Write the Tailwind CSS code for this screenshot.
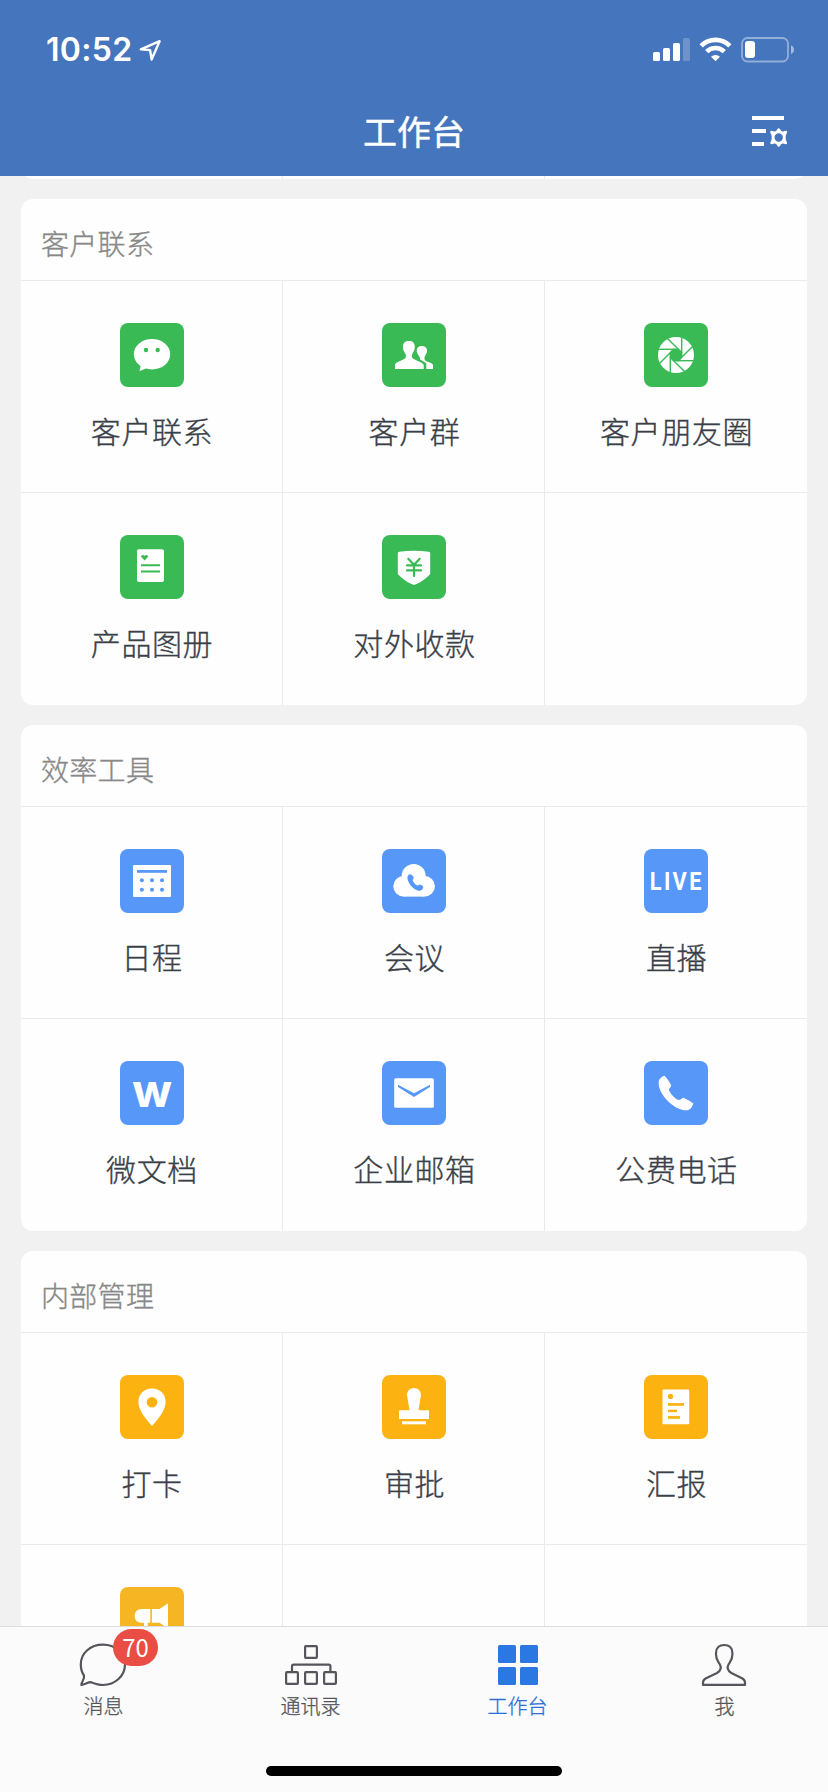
<!DOCTYPE html>
<html lang="zh-CN">
<head>
<meta charset="utf-8">
<title>工作台</title>
<script src="https://cdn.jsdelivr.net/npm/@tailwindcss/browser@4"></script>
</head>
<body class="bg-[#f1f1f1]">
<div class="flex h-[1792px] w-[828px] flex-col overflow-hidden bg-[#f1f1f1] font-['Noto_Sans_CJK_SC',sans-serif]">

  <header class="h-[176px] shrink-0 bg-[#4575bc] text-white">
    <div class="flex h-[99px] items-center justify-between pr-[33px] pl-[46px]">
      <div class="flex items-center gap-[6px]">
        <span class="font-['Inter',sans-serif] text-[32px] leading-none font-semibold tracking-[0.3px]">10:52</span>
        <svg class="h-[24px] w-[24px]" viewBox="0 0 24 24" fill="none" stroke="#fff" stroke-width="2.4" stroke-linejoin="round"><path d="M2.8 11.3 21.6 3.2 13.6 21.6 12.1 12.1Z"/></svg>
      </div>
      <svg class="h-[27px] w-[142px]" viewBox="653 36 142 27">
        <g fill="#fff"><rect x="653" y="52" width="7" height="9" rx="1.6"/><rect x="663" y="48" width="7" height="13" rx="1.6"/><rect x="673" y="43" width="7" height="18" rx="1.6"/><rect x="683" y="38" width="7" height="23" rx="1.6" opacity=".22"/></g>
        <g fill="none" stroke="#fff" stroke-width="4.6"><path d="M701.1 45.9a20.3 20.3 0 0 1 28.8 0"/><path d="M706.7 51.6a12.4 12.4 0 0 1 17.6 0"/></g>
        <path d="M715.5 61.2l-4.5-4.5a6.5 6.5 0 0 1 9 0z" fill="#fff"/>
        <rect x="742" y="38" width="46" height="23.5" rx="5.5" fill="none" stroke="#fff" stroke-width="1.8" opacity=".42"/>
        <rect x="745" y="41" width="10" height="17" rx="3" fill="#fff"/>
        <path d="M791 45.2c4 1.400 4 7.300 0 8.700z" fill="#fff" opacity=".5"/>
      </svg>
    </div>
    <div class="grid h-[66px] grid-cols-3 items-center pr-[38px] pl-[38px]">
      <span></span>
      <h1 class="pb-[2px] text-center text-[34px] leading-none font-normal [-webkit-text-stroke:0.4px]">工作台</h1>
      <svg class="h-[34px] w-[38px] justify-self-end" viewBox="752 115 38 34">
        <g fill="#fff"><rect x="752" y="116" width="32" height="4"/><rect x="752" y="129" width="14" height="4"/><rect x="752" y="142" width="12" height="4"/></g>
        <path fill="#fff" fill-rule="evenodd" d="M778.700 128.200c1 0 1.300 1.200 2.300 2.600.7.600 1.400.8 2.200.7 1.400-.2 3-1.200 3.700-.3.800 1-.5 2.200-1 3.800-.3.900-.3 4.100 0 5 .5 1.600 1.800 2.800 1 3.800-.7.900-2.300-.1-3.700-.3-.8-.1-1.500.1-2.200.7-1 1.400-1.300 2.600-2.300 2.600s-1.300-1.200-2.300-2.600c-.7-.6-1.400-.8-2.200-.7-1.400.2-3 1.200-3.700.3-.8-1 .5-2.200 1-3.800.3-.9.300-4.100 0-5-.5-1.600-1.800-2.800-1-3.800.7-.9 2.300.1 3.700.3.800.1 1.500-.1 2.200-.7 1-1.400 1.300-2.600 2.300-2.600ZM778.700 133.300a4.200 4.200 0 1 0 0 8.400 4.200 4.200 0 1 0 0-8.400Z"/>
      </svg>
    </div>
  </header>

  <main class="flex min-h-0 flex-1 flex-col gap-[20px] overflow-hidden px-[21px] text-[#3a4048] [-webkit-text-stroke:0.35px]">
    <!-- Tail of the card scrolled under the header -->
    <div class="flex h-[3px] shrink-0 flex-col justify-end overflow-hidden">
      <div class="grid h-[30px] shrink-0 grid-cols-3 overflow-hidden rounded-b-[12px] bg-white"><i class="border-r border-[#e9ebeb]"></i><i class="border-r border-[#e9ebeb]"></i><i></i></div>
    </div>

    <section class="shrink-0 overflow-hidden rounded-[12px] bg-[#fefefe]">
      <h2 class="flex h-[82px] items-center border-b border-[#e9ebeb] pt-[7px] pl-[20px] text-[28px] leading-none font-light tracking-[0.3px] text-[#888]">客户联系</h2>
      <div class="grid grid-cols-3 text-[30px] leading-none font-light tracking-[0.6px]">
        <div class="flex h-[212px] flex-col items-center gap-[28px] border-r border-b border-[#e9ebeb] pt-[42px]">
          <svg class="h-[64px] w-[64px] shrink-0" viewBox="0 0 64 64"><rect width="64" height="64" rx="8" fill="#39ba55"/><ellipse cx="32" cy="31.200" rx="18.200" ry="15.300" fill="#fff"/><path d="M20.600 40.500c.3 3-.5 5-1.300 7.500 2.700-.5 4.700-2 7.200-2.700z" fill="#fff"/><g fill="#39ba55"><circle cx="26" cy="27" r="2.200"/><circle cx="37.700" cy="27" r="2.200"/></g></svg>
          <span class="pl-px">客户联系</span>
        </div>
        <div class="flex h-[212px] flex-col items-center gap-[28px] border-r border-b border-[#e9ebeb] pt-[42px] pl-px">
          <svg class="h-[64px] w-[64px] shrink-0" viewBox="0 0 64 64"><rect width="64" height="64" rx="8" fill="#39ba55"/><path fill="#fff" d="M38 46V36.500c.1-1.200-.4-2.500-1.300-4-1.300-2-2-3.200-2-5 0-2.800 2-4.500 5.100-4.500s5.200 1.700 5.200 4.500c0 1.800-.6 3-1.700 5-1 1.700-1.100 2.900-.4 4.400 1.500 2.300 7 2.300 8.100 4.900V46z"/><path d="M43 47V41C42 39.500 37 38 34 35.800" fill="none" stroke="#39ba55" stroke-width="2.600"/><path fill="#fff" d="M13 46v-4.700c2.500-3.500 9-3.800 10.700-6.800.6-1.500.2-3-.7-4.500-1.400-2-2.100-4-2.100-6.500 0-3.500 2.200-5.500 6-5.500s5.900 2 5.900 5.500c0 2.500-.7 4.500-2.100 6.500-.9 1.500-1.200 3-.6 4.500 1.700 3 8.600 3.300 10.900 6.800V46z"/></svg>
          <span class="pl-px">客户群</span>
        </div>
        <div class="flex h-[212px] flex-col items-center gap-[28px] border-b border-[#e9ebeb] pt-[42px]">
          <svg class="h-[64px] w-[64px] shrink-0" viewBox="0 0 64 64"><rect width="64" height="64" rx="8" fill="#39ba55"/><circle cx="32" cy="32" r="18" fill="#fff"/><g transform="translate(32 32)" fill="#39ba55" stroke="#39ba55" stroke-width="1.400"><path d="M5.700-2.400 2.400-5.700H-2.400L-5.700-2.400V2.400L-2.400 5.700H2.400L5.700 2.400Z"/><path d="M5.700-18.500V-2"/><path d="M5.700-18.500V-2" transform="rotate(45)"/><path d="M5.700-18.500V-2" transform="rotate(90)"/><path d="M5.700-18.500V-2" transform="rotate(135)"/><path d="M5.700-18.500V-2" transform="rotate(180)"/><path d="M5.700-18.500V-2" transform="rotate(225)"/><path d="M5.700-18.500V-2" transform="rotate(270)"/><path d="M5.700-18.500V-2" transform="rotate(315)"/></g></svg>
          <span class="pl-px">客户朋友圈</span>
        </div>
        <div class="flex h-[212px] flex-col items-center gap-[28px] border-r border-[#e9ebeb] pt-[42px]">
          <svg class="h-[64px] w-[64px] shrink-0" viewBox="0 0 64 64"><rect width="64" height="64" rx="8" fill="#39ba55"/><rect x="17" y="14.300" width="27" height="32.700" rx="2" fill="#fff"/><path d="M24.600 25.400 21.500 22.300c-1.200-1.800 1.300-3.500 3.100-1.500 1.800-2 4.300-.3 3.100 1.500z" fill="#39ba55"/><path d="M21 30.200H40M21 36.600H40" stroke="#39ba55" stroke-width="2"/></svg>
          <span class="pl-px">产品图册</span>
        </div>
        <div class="flex h-[212px] flex-col items-center gap-[28px] border-r border-[#e9ebeb] pt-[42px] pl-px">
          <svg class="h-[64px] w-[64px] shrink-0" viewBox="0 0 64 64"><rect width="64" height="64" rx="8" fill="#39ba55"/><path d="M15.800 18.500c0-1 .5-1.500 1.500-1.700 9.500-1.400 19.900-1.400 29.400 0 1 .2 1.500.7 1.500 1.700V39C44 44 37 48.500 32 50 27 48.500 20 44 15.800 39z" fill="#fff"/><path d="M26.300 23.800 32 29.800 37.700 23.800M25 30.400H39M25 35.400H39M32 30V41" fill="none" stroke="#39ba55" stroke-width="2.200" stroke-linecap="round"/></svg>
          <span class="pl-px">对外收款</span>
        </div>
        <div></div>
      </div>
    </section>

    <section class="shrink-0 overflow-hidden rounded-[12px] bg-[#fefefe]">
      <h2 class="flex h-[82px] items-center border-b border-[#e9ebeb] pt-[7px] pl-[20px] text-[28px] leading-none font-light tracking-[0.3px] text-[#888]">效率工具</h2>
      <div class="grid grid-cols-3 text-[30px] leading-none font-light tracking-[0.6px]">
        <div class="flex h-[212px] flex-col items-center gap-[28px] border-r border-b border-[#e9ebeb] pt-[42px]">
          <svg class="h-[64px] w-[64px] shrink-0" viewBox="0 0 64 64"><rect width="64" height="64" rx="8" fill="#5797f8"/><rect x="13" y="16" width="38" height="32" rx="1" fill="#fff"/><g fill="#5797f8"><rect x="17" y="21" width="30" height="2.800"/><circle cx="21.900" cy="31.200" r="2"/><circle cx="32" cy="31.200" r="2"/><circle cx="42" cy="31.200" r="2"/><circle cx="21.900" cy="40.800" r="2"/><circle cx="32" cy="40.800" r="2"/><circle cx="42" cy="40.800" r="2"/></g></svg>
          <span class="pl-px">日程</span>
        </div>
        <div class="flex h-[212px] flex-col items-center gap-[28px] border-r border-b border-[#e9ebeb] pt-[42px] pl-px">
          <svg class="h-[64px] w-[64px] shrink-0" viewBox="0 0 64 64"><rect width="64" height="64" rx="8" fill="#5797f8"/><g fill="#fff"><circle cx="31.700" cy="27" r="12"/><circle cx="21.600" cy="37.300" r="10.300"/><circle cx="42.600" cy="37.300" r="10.300"/><rect x="21.500" y="30" width="21" height="17.600"/></g><path d="M25.400 28.500c0-2 1.300-3.300 2.800-3.300 1.700.2 2.700 1.800 3.600 3.600-.2 1-1.200 1.700-1.200 2.600 1 2.200 2.800 4 4.800 5.200.8 0 1.400-1.100 2.400-1.200 1.600.6 3.200 1.200 3.500 2.700 0 2-1.900 4-4.300 3.700-5.500-.7-11.600-7.800-11.600-13.300z" fill="#5797f8"/></svg>
          <span class="pl-px">会议</span>
        </div>
        <div class="flex h-[212px] flex-col items-center gap-[28px] border-b border-[#e9ebeb] pt-[42px]">
          <svg class="h-[64px] w-[64px] shrink-0" viewBox="0 0 64 64"><rect width="64" height="64" rx="8" fill="#5797f8"/><text transform="translate(5.800 41) scale(.86 1)" textLength="60" lengthAdjust="spacing" fill="#fff" letter-spacing="0" font-family="Roboto, sans-serif" font-weight="700" font-size="25.300">LIVE</text></svg>
          <span class="pl-px">直播</span>
        </div>
        <div class="flex h-[212px] flex-col items-center gap-[28px] border-r border-[#e9ebeb] pt-[42px]">
          <svg class="h-[64px] w-[64px] shrink-0" viewBox="0 0 64 64"><rect width="64" height="64" rx="8" fill="#5797f8"/><text transform="translate(32.200 45.700) scale(1.100 1)" text-anchor="middle" fill="#fff" letter-spacing="0" font-family="Inter, sans-serif" font-weight="800" font-size="34.500">W</text></svg>
          <span class="pl-px">微文档</span>
        </div>
        <div class="flex h-[212px] flex-col items-center gap-[28px] border-r border-[#e9ebeb] pt-[42px] pl-px">
          <svg class="h-[64px] w-[64px] shrink-0" viewBox="0 0 64 64"><rect width="64" height="64" rx="8" fill="#5797f8"/><rect x="12.200" y="17.200" width="39.600" height="29.600" rx="1.500" fill="#fff"/><path d="M16 23.700 32 32.300 48 23.700V26L32 36 16 26Z" fill="#5797f8"/></svg>
          <span class="pl-px">企业邮箱</span>
        </div>
        <div class="flex h-[212px] flex-col items-center gap-[28px] pt-[42px]">
          <svg class="h-[64px] w-[64px] shrink-0" viewBox="0 0 64 64"><rect width="64" height="64" rx="8" fill="#5797f8"/><path d="M14.700 20.500C15 18 17 16 20.500 14.700 22 16 25.500 20.500 27.300 24.500 27 26 25.500 27 24.800 28.700 25.800 32 31 37.800 34.800 39.100 36.500 39 38 37 39.300 36.800 43 38.500 47 40.500 49.300 42.500 48.500 45.500 46.500 48.500 44 49.200 32 51 13.500 34 14.700 20.500Z" fill="#fff"/></svg>
          <span class="pl-px">公费电话</span>
        </div>
      </div>
    </section>

    <section class="shrink-0 overflow-hidden rounded-[12px] bg-[#fefefe]">
      <h2 class="flex h-[82px] items-center border-b border-[#e9ebeb] pt-[7px] pl-[20px] text-[28px] leading-none font-light tracking-[0.3px] text-[#888]">内部管理</h2>
      <div class="grid grid-cols-3 text-[30px] leading-none font-light tracking-[0.6px]">
        <div class="flex h-[212px] flex-col items-center gap-[28px] border-r border-b border-[#e9ebeb] pt-[42px]">
          <svg class="h-[64px] w-[64px] shrink-0" viewBox="0 0 64 64"><rect width="64" height="64" rx="8" fill="#fcb211"/><path d="M32 13.500c8 0 13.600 5.700 13.600 13.500 0 8-6.600 16-13.600 24-7-8-13.600-16-13.600-24 0-7.800 5.600-13.500 13.600-13.500z" fill="#fff"/><circle cx="32" cy="27.200" r="5.300" fill="#fcb211"/></svg>
          <span class="pl-px">打卡</span>
        </div>
        <div class="flex h-[212px] flex-col items-center gap-[28px] border-r border-b border-[#e9ebeb] pt-[42px] pl-px">
          <svg class="h-[64px] w-[64px] shrink-0" viewBox="0 0 64 64"><rect width="64" height="64" rx="8" fill="#fcb211"/><path d="M25 20c0-4 3-7 7-7s7 3 7 7L36.500 35.200H46c.7 0 1 .3 1 1V44H17v-7.800c0-.7.300-1 1-1h9.500z" fill="#fff"/><rect x="20" y="46.300" width="24" height="3" fill="#fff"/></svg>
          <span class="pl-px">审批</span>
        </div>
        <div class="flex h-[212px] flex-col items-center gap-[28px] border-b border-[#e9ebeb] pt-[42px]">
          <svg class="h-[64px] w-[64px] shrink-0" viewBox="0 0 64 64"><rect width="64" height="64" rx="8" fill="#fcb211"/><rect x="18.500" y="14.600" width="26.700" height="34.700" rx=".8" fill="#fff"/><g fill="#fcb211"><circle cx="26.500" cy="21.400" r="2.600"/><rect x="24" y="28.100" width="16" height="2.700"/><rect x="24" y="34.700" width="9" height="2.400"/><rect x="24" y="41.100" width="12" height="2.700"/></g></svg>
          <span class="pl-px">汇报</span>
        </div>
        <div class="flex h-[212px] flex-col items-center border-r border-[#e9ebeb] pt-[42px]">
          <svg class="h-[64px] w-[64px] shrink-0" viewBox="0 0 64 64"><rect width="64" height="64" rx="8" fill="#f6b522"/><path d="M30.300 22V35.800H27.700V45H24V35.800H21.600C17.500 35.800 14.700 33 14.700 29S17.500 22 21.600 22ZM31.900 22H39.500L48 16.300V41.500L39.500 35.800H31.900Z" fill="#fff"/></svg>
        </div>
        <div class="border-r border-[#e9ebeb]"></div>
        <div></div>
      </div>
    </section>
  </main>

  <footer class="flex h-[166px] shrink-0 flex-col items-center border-t border-[#dcdddd] bg-[#fbfbfb]">
    <nav class="grid h-[139px] w-full grid-cols-4 pt-[13px] text-[20px] leading-none text-[#55565a]">
      <a class="flex flex-col items-center gap-[8px]">
        <span class="relative">
          <svg class="h-[48px] w-[57px]" viewBox="0 0 57 48" fill="none" stroke="#55565b" stroke-width="2.200" stroke-linejoin="round"><path d="M9 35.500C6.500 32 5.800 28 5.800 24.500 5.800 13 15.500 4.700 27.900 4.700S50 13.500 50 24.500C50 36 40 45 28 45 24 45 19.500 43.500 16 42.200 13 42 9 45.200 6.300 44.900 6 42.500 10 39.500 9 35.500Z"/></svg>
          <b class="absolute -top-[11px] left-[38px] flex h-[37px] w-[45px] items-center justify-center rounded-full bg-[#e94d44] pb-[2px] text-[24px] leading-none font-normal text-white">70</b>
        </span>
        <span class="font-light [-webkit-text-stroke:0.3px]">消息</span>
      </a>
      <a class="flex flex-col items-center gap-[8px]">
        <svg class="h-[48px] w-[57px]" viewBox="0 0 57 48" fill="none" stroke="#55565b" stroke-width="2.200"><rect x="23.100" y="6.100" width="11.800" height="11.800" rx=".8"/><rect x="4.100" y="32.100" width="11.800" height="11.800" rx=".8"/><rect x="23.100" y="32.100" width="11.800" height="11.800" rx=".8"/><rect x="42.100" y="32.100" width="11.800" height="11.800" rx=".8"/><path d="M10 31.500V26.300Q10 24.700 11.600 24.700H46.800Q48.400 24.700 48.400 26.300V31.500"/></svg>
        <span class="font-light [-webkit-text-stroke:0.3px]">通讯录</span>
      </a>
      <a class="flex flex-col items-center gap-[8px] text-[#2a70d8]">
        <svg class="h-[48px] w-[57px]" viewBox="0 0 57 48" fill="#2b78e2"><rect x="9" y="5" width="18" height="18" rx="1.500"/><rect x="31" y="5" width="18" height="18" rx="1.500"/><rect x="9" y="27" width="18" height="18" rx="1.500"/><rect x="31" y="27" width="18" height="18" rx="1.500"/></svg>
        <span class="font-light [-webkit-text-stroke:0.3px]">工作台</span>
      </a>
      <a class="flex flex-col items-center gap-[8px]">
        <svg class="h-[48px] w-[57px]" viewBox="0 0 57 48" fill="none" stroke="#55565b" stroke-width="2.200" stroke-linejoin="round"><path d="M7 44.900V42.500C7 40.300 8 39.200 10 38.200L21 33C24.800 30.800 25.500 27.500 23.800 24.300 22.500 22 20 20 20 14.500V13C20 8 23.200 5 28.200 5S36.400 8 36.400 13V14.500C36.400 20 33.900 22 32.600 24.300 30.900 27.500 31.600 30.800 35.400 33L46 38.200C48 39.200 49 40.300 49 42.500V44.900Z"/></svg>
        <span class="font-light [-webkit-text-stroke:0.3px]">我</span>
      </a>
    </nav>
    <div class="h-[10px] w-[296px] rounded-full bg-black"></div>
  </footer>
</div>
</body>
</html>
